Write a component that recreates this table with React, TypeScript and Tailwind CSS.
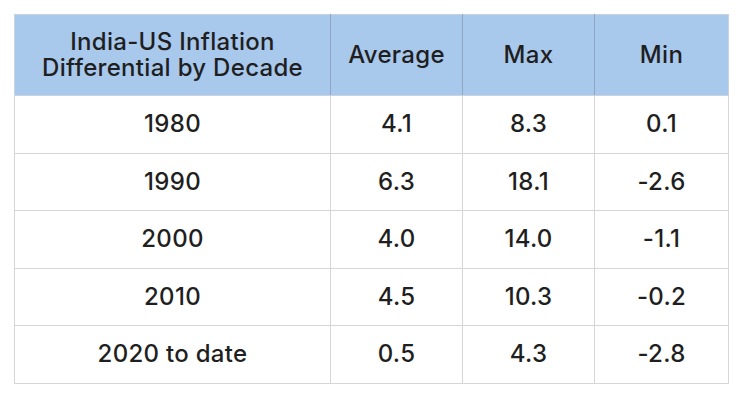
const rows = [
  ["1980", "4.1", "8.3", "0.1"],
  ["1990", "6.3", "18.1", "-2.6"],
  ["2000", "4.0", "14.0", "-1.1"],
  ["2010", "4.5", "10.3", "-0.2"],
  ["2020 to date", "0.5", "4.3", "-2.8"],
];

export default function App() {
  return (
    <div className="w-[742px] h-[400px] bg-white pt-[14px] pl-[14px] font-['Inter',sans-serif] text-[#1f1f1f]">
      <table className="w-[714px] border-collapse table-fixed text-[24px] font-medium tracking-[0.3px] text-center">
        <colgroup>
          <col className="w-[316px]" />
          <col className="w-[132px]" />
          <col className="w-[132px]" />
          <col className="w-[134px]" />
        </colgroup>
        <thead>
          <tr className="h-[81px] bg-[#a8c8ec]">
            <th className="font-medium leading-[26px] border border-[#c9d3df] border-r-[#8ea6c4]">
              <div>India-US Inflation</div>
              <div>Differential by Decade</div>
            </th>
            <th className="font-medium border border-[#c9d3df] border-r-[#8ea6c4]">Average</th>
            <th className="font-medium border border-[#c9d3df] border-r-[#8ea6c4]">Max</th>
            <th className="font-medium border border-[#c9d3df]">Min</th>
          </tr>
        </thead>
        <tbody>
          {rows.map((r, i) => (
            <tr key={i} className="h-[57.5px]">
              {r.map((c, j) => (
                <td key={j} className="border border-[#d6d6d6]">
                  {c}
                </td>
              ))}
            </tr>
          ))}
        </tbody>
      </table>
    </div>
  );
}
